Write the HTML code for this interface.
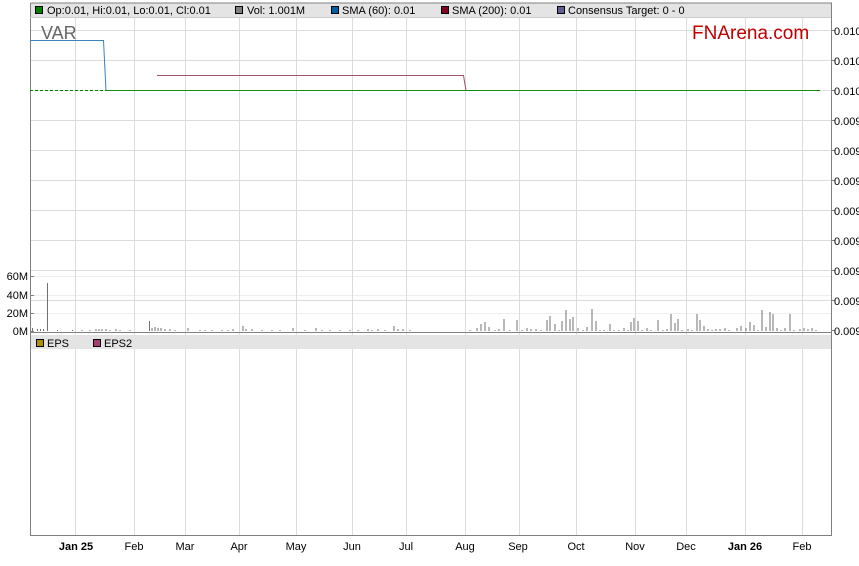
<!DOCTYPE html>
<html><head><meta charset="utf-8"><style>
body{margin:0;background:#fff;width:859px;height:566px;overflow:hidden;font-family:"Liberation Sans",Arial,sans-serif;}
svg{position:absolute;left:0;top:0}
</style></head><body>
<svg width="859" height="566" xmlns="http://www.w3.org/2000/svg" font-family="Liberation Sans, Arial, sans-serif">
<rect x="30" y="3" width="801" height="14" fill="#e4e4e4"/>
<g stroke="#dcdcdc" stroke-width="1">
<line x1="30" y1="30.5" x2="831" y2="30.5"/><line x1="30" y1="60.5" x2="831" y2="60.5"/><line x1="30" y1="90.5" x2="831" y2="90.5"/><line x1="30" y1="120.5" x2="831" y2="120.5"/><line x1="30" y1="150.5" x2="831" y2="150.5"/><line x1="30" y1="180.5" x2="831" y2="180.5"/><line x1="30" y1="210.5" x2="831" y2="210.5"/><line x1="30" y1="240.5" x2="831" y2="240.5"/><line x1="30" y1="270.5" x2="831" y2="270.5"/><line x1="30" y1="300.5" x2="831" y2="300.5"/>
<line x1="30" y1="276.5" x2="831" y2="276.5" stroke="#eee"/><line x1="30" y1="295.5" x2="831" y2="295.5" stroke="#eee"/><line x1="30" y1="313.5" x2="831" y2="313.5" stroke="#eee"/>
</g>
<g stroke="#dcdcdc">
<line x1="75.5" y1="17" x2="75.5" y2="535"/><line x1="134.5" y1="17" x2="134.5" y2="535"/><line x1="185.5" y1="17" x2="185.5" y2="535"/><line x1="239.5" y1="17" x2="239.5" y2="535"/><line x1="296.5" y1="17" x2="296.5" y2="535"/><line x1="352.5" y1="17" x2="352.5" y2="535"/><line x1="406.5" y1="17" x2="406.5" y2="535"/><line x1="465.5" y1="17" x2="465.5" y2="535"/><line x1="519.5" y1="17" x2="519.5" y2="535"/><line x1="576.5" y1="17" x2="576.5" y2="535"/><line x1="635.5" y1="17" x2="635.5" y2="535"/><line x1="686.5" y1="17" x2="686.5" y2="535"/><line x1="745.5" y1="17" x2="745.5" y2="535"/><line x1="802.5" y1="17" x2="802.5" y2="535"/>
</g>
<rect x="30" y="335" width="801" height="14" fill="#e4e4e4"/>
<g stroke="#808080" fill="none">
<path d="M30.5 3V535.5H831.5V3H30.5"/>
<line x1="30" y1="332.5" x2="831" y2="332.5"/>
<line x1="30" y1="17.5" x2="831" y2="17.5" stroke="#ccc"/>
</g>
<g stroke="#808080">
<line x1="831" y1="30.5" x2="835" y2="30.5"/><line x1="831" y1="60.5" x2="835" y2="60.5"/><line x1="831" y1="90.5" x2="835" y2="90.5"/><line x1="831" y1="120.5" x2="835" y2="120.5"/><line x1="831" y1="150.5" x2="835" y2="150.5"/><line x1="831" y1="180.5" x2="835" y2="180.5"/><line x1="831" y1="210.5" x2="835" y2="210.5"/><line x1="831" y1="240.5" x2="835" y2="240.5"/><line x1="831" y1="270.5" x2="835" y2="270.5"/><line x1="831" y1="300.5" x2="835" y2="300.5"/><line x1="831" y1="330.5" x2="835" y2="330.5"/>
<line x1="30" y1="276.5" x2="34" y2="276.5"/><line x1="30" y1="295.5" x2="34" y2="295.5"/><line x1="30" y1="313.5" x2="34" y2="313.5"/><line x1="30" y1="331.5" x2="34" y2="331.5"/>
</g>
<g font-size="11" fill="#000">
<text x="834" y="35">0.010</text><text x="834" y="65">0.010</text><text x="834" y="95">0.010</text><text x="834" y="125">0.009</text><text x="834" y="155">0.009</text><text x="834" y="185">0.009</text><text x="834" y="215">0.009</text><text x="834" y="245">0.009</text><text x="834" y="275">0.009</text><text x="834" y="305">0.009</text><text x="834" y="335">0.009</text>
<text x="28" y="280" text-anchor="end">60M</text><text x="28" y="299" text-anchor="end">40M</text><text x="28" y="317" text-anchor="end">20M</text><text x="28" y="335" text-anchor="end">0M</text>
</g>
<g font-size="11" fill="#000" text-anchor="middle">
<text x="76" y="550" font-weight="bold">Jan 25</text><text x="134" y="550">Feb</text><text x="185" y="550">Mar</text><text x="239" y="550">Apr</text><text x="296" y="550">May</text><text x="352" y="550">Jun</text><text x="406" y="550">Jul</text><text x="465" y="550">Aug</text><text x="518" y="550">Sep</text><text x="576" y="550">Oct</text><text x="635" y="550">Nov</text><text x="686" y="550">Dec</text><text x="745" y="550" font-weight="bold">Jan 26</text><text x="802" y="550">Feb</text>
</g>
<g font-size="11" fill="#000">
<rect x="35.5" y="6.5" width="7" height="7" fill="#008000" stroke="#000"/><text x="47" y="14">Op:0.01, Hi:0.01, Lo:0.01, Cl:0.01</text>
<rect x="235.5" y="6.5" width="7" height="7" fill="#808080" stroke="#000"/><text x="247" y="14">Vol: 1.001M</text>
<rect x="331.5" y="6.5" width="7" height="7" fill="#0060a0" stroke="#000"/><text x="342" y="14">SMA (60): 0.01</text>
<rect x="441.5" y="6.5" width="7" height="7" fill="#800020" stroke="#000"/><text x="452" y="14">SMA (200): 0.01</text>
<rect x="557.5" y="6.5" width="7" height="7" fill="#606090" stroke="#000"/><text x="568" y="14">Consensus Target: 0 - 0</text>
<rect x="36.5" y="339.5" width="7" height="7" fill="#b09000" stroke="#000"/><text x="47" y="347">EPS</text>
<rect x="93.5" y="339.5" width="7" height="7" fill="#a04070" stroke="#000"/><text x="104" y="347">EPS2</text>
</g>
<text x="41" y="39" font-size="18" fill="#666">VAR</text>
<text x="692" y="39" font-size="19" fill="#c00000">FNArena.com</text>
<path d="M30 40.5H103.5L106 90.5H820" stroke="#3a82c0" fill="none"/>
<path d="M157 75.5H463.5L466 90.5" stroke="#a05070" fill="none"/>
<line x1="30" y1="90.5" x2="106" y2="90.5" stroke="#008000" stroke-dasharray="3,2"/>
<line x1="106" y1="90.5" x2="820" y2="90.5" stroke="#109010"/>
<g stroke="#707070">
<path d="M47.5 331V283M32.5 331V328M37.5 331V329M40.5 331V329M43.5 331V329M57.5 331V330M72.5 331V330M82 331V330M90 331V330M96 331V329M99 331V329M102 331V329M106 331V329M110 331V330M116 331V329M120 331V330M130 331V330M149.5 331V321M152 331V328M155 331V327M158 331V328M161 331V328M165 331V329M170 331V329M175 331V330M188 331V328M200 331V330M205 331V330M212 331V330M222 331V330M228 331V330M233 331V329M243 331V326M246 331V329M252 331V329M262 331V330M272 331V330M280 331V330M293 331V328M305 331V330M316 331V328M322 331V330M330 331V330M340 331V330M350 331V330M358 331V330M368 331V329M372 331V330M378 331V329M385 331V330M394 331V326M398 331V329M403 331V329M410 331V330M470 331V330M477 331V328M481 331V324M485 331V322M489 331V327M495 331V330M499 331V329M504 331V319M510 331V330M517 331V320M522 331V330M527 331V328M531 331V329M536 331V329M541 331V330M547 331V320M550 331V316M555 331V324M559 331V330M562 331V321M566 331V310M570 331V319M573 331V317M578 331V328M583 331V330M587 331V327M592 331V309M596 331V321M600 331V330M604 331V330M610 331V324M614 331V330M619 331V330M624 331V328M628 331V330M631 331V322M634 331V318M638 331V321M642 331V330M647 331V328M651 331V330M658 331V320M663 331V330M667 331V329M671 331V314M675 331V323M678 331V319M682 331V330M688 331V329M692 331V330M697 331V314M700 331V320M704 331V326M708 331V329M712 331V330M716 331V329M720 331V329M725 331V328M729 331V330M737 331V328M741 331V326M746 331V328M750 331V322M754 331V325M758 331V330M762 331V310M766 331V327M770 331V312M773 331V314M777 331V328M781 331V330M785 331V328M790 331V314M794 331V330M800 331V329M804 331V328M808 331V329M812 331V328M816 331V330"/>
</g>
</svg>
</body></html>
